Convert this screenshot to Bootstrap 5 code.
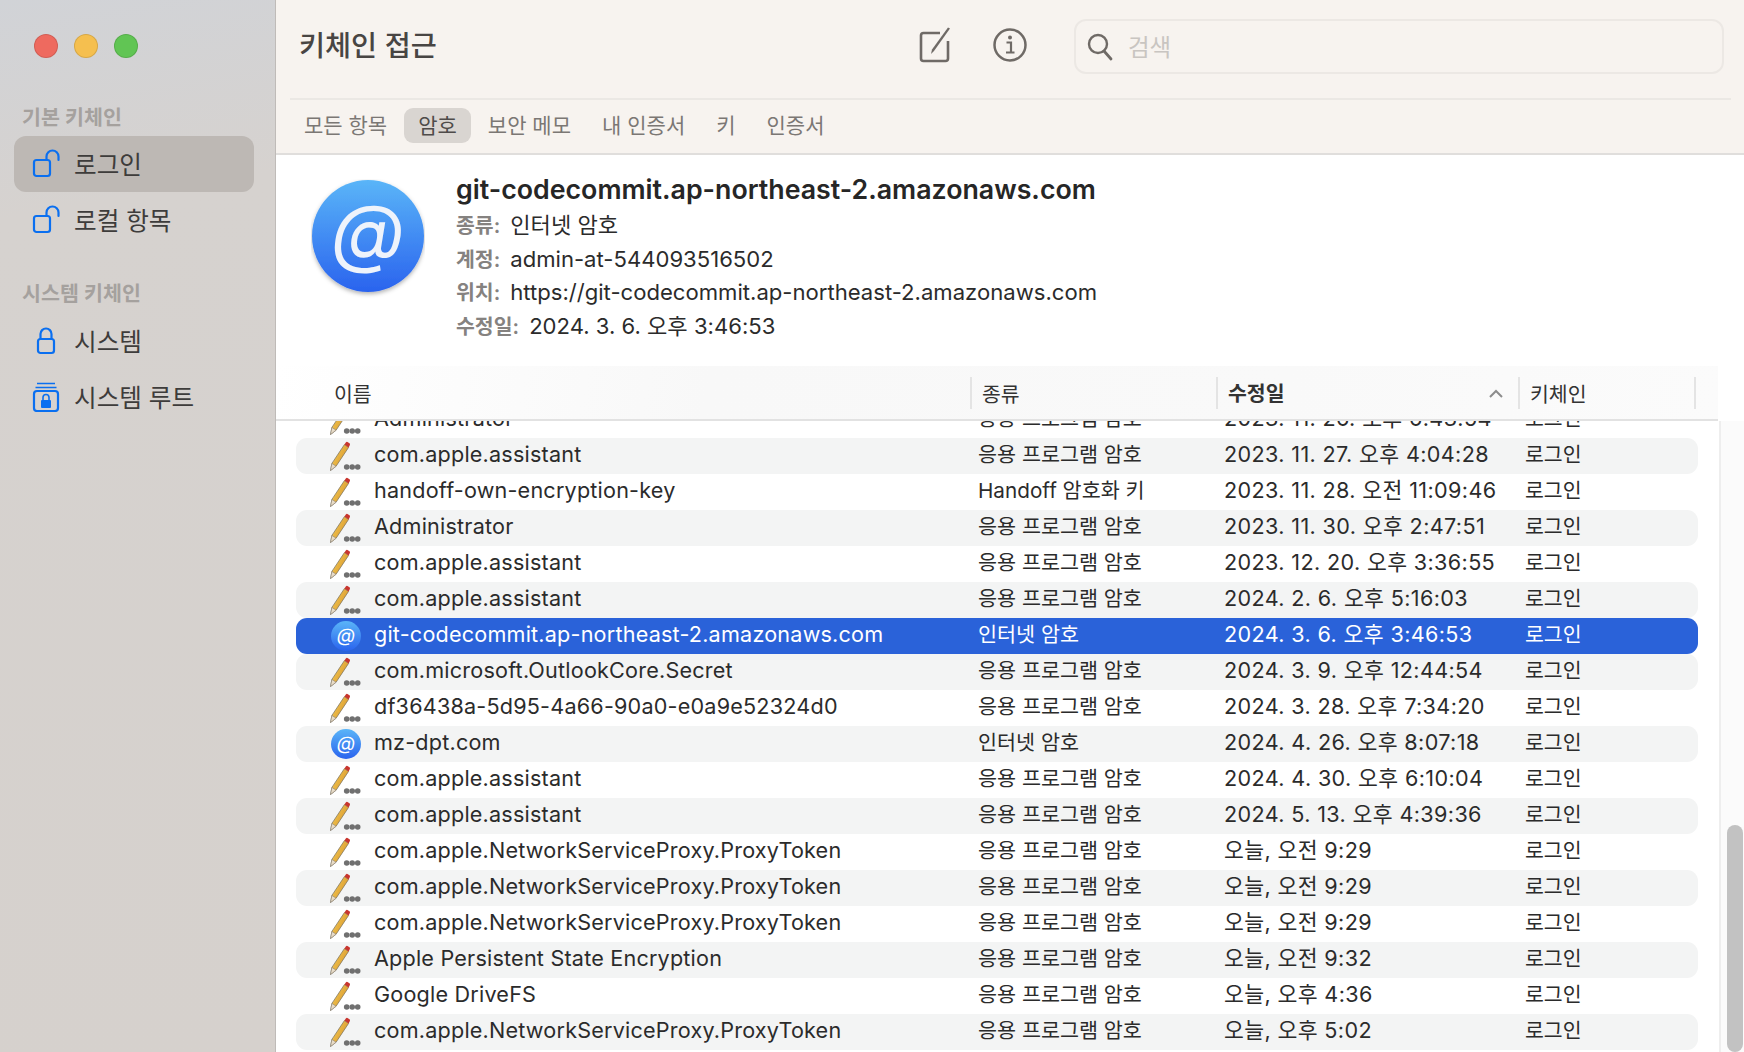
<!DOCTYPE html>
<html lang="ko">
<head>
  <meta charset="UTF-8" />
  <meta name="viewport" content="width=device-width, initial-scale=1" />
  <title>키체인 접근</title>
  <link href="https://cdn.jsdelivr.net/npm/bootstrap@5.3.0/dist/css/bootstrap.min.css" rel="stylesheet" />
  <style>
    html, body { height: 100%; }
    body {
      font-family: Inter, "Noto Sans CJK KR", sans-serif;
      background: #fff;
      color: #2b2b2b;
      overflow: hidden;
    }
    .app-frame { height: 1052px; }

    /* Sidebar */
    .side-pane {
      width: 276px;
      flex: none;
      padding: 0 21px 0 14px;
      background: linear-gradient(170deg, #d1d3d7 0, #d6d2cf 20%, #d6d1cd 100%);
      border-right: 1px solid #bfbbb8;
    }
    .traffic { gap: 16px; padding: 34px 0 0 20px; height: 102px; }
    .traffic span { width: 24px; height: 24px; border-radius: 50%; border: 1px solid rgba(0, 0, 0, .12); }
    .side-label { font-size: 20.6px; line-height: 28px; font-weight: 600; color: #a5a19e; padding: 2px 0 0 8px; height: 34px; }
    .side-label-next { height: 33px; margin-top: 32px; padding-top: 0; }
    .side-item {
      height: 56px;
      border-radius: 12px;
      font-size: 24.6px;
      color: #3e3c3b;
      padding-left: 18px;
      gap: 14px;
    }
    .side-item span { padding-top: 2px; }
    .side-item svg { width: 28px; height: 30px; flex: none; }
    .side-item.is-on { background: #bdb8b4; }

    /* Toolbar */
    .tool-area { background: #f7f3ef; border-bottom: 2px solid #e0dedc; height: 155px; flex: none; padding: 0 13px 0 14px; }
    .tool-top { height: 100px; border-bottom: 2px solid #ebe8e4; padding-left: 9px; }
    .app-title { font-size: 28.3px; font-weight: 500; color: #484543; width: 620px; margin: -4px 0 0; }
    .search-box {
      width: 650px;
      height: 55px;
      margin: -5px 7px 0 auto;
      border: 2px solid #ece8e4;
      border-radius: 12px;
      padding-left: 11px;
      gap: 15px;
      font-size: 23.5px;
      color: #c9c5c1;
    }
    .search-box span { padding-top: 2px; }
    .tool-tabs { height: 53px; gap: 17px; padding: 0 0 3px 14px; font-size: 21px; color: #7b7774; }
    .tool-tabs span { line-height: 35px; }
    .tool-tabs .is-on { background: #d9d5d1; color: #4f4c4a; border-radius: 9px; padding: 0 14px; }
    .tab-spaced { margin-left: 14px; }
    .tool-glyph { margin-top: -9px; flex: none; }
    .tool-glyph-next { margin-left: 39px; }

    /* Detail */
    .detail-pane { height: 211px; flex: none; padding: 16px 0 0 35px; gap: 31px; }
    .detail-art { margin-top: 8px; flex: none; }
    .detail-title { font-size: 26.75px; font-weight: 600; line-height: 36px; height: 38px; color: #262626; }
    .detail-line { font-size: 22.1px; line-height: 33.7px; height: 33.7px; color: #2b2b2b; }
    .detail-line b { font-weight: 600; color: #858280; margin-right: 10px; font-size: 20.5px; }

    /* Table header */
    .list-head {
      height: 55px;
      flex: none;
      width: 1442px;
      background: linear-gradient(100deg, #fff 0, #f8f8f8 30%, #f9f9f9 70%, #fbfbfb 100%);
      border-bottom: 2px solid #e2e2e2;
      font-size: 20.5px;
      color: #333;
    }
    .head-cell { height: 32px; line-height: 35px; border-left: 2px solid #e4e4e4; padding-left: 10px; flex: none; }
    .head-name { width: 694px; padding-left: 58px; border-left: 0; }
    .head-type { width: 246px; }
    .head-date { width: 302px; font-weight: 600; padding: 2px 14px 0 10px; }
    .head-key { width: 178px; border-right: 2px solid #e4e4e4; }

    /* Rows */
    .list-body { min-height: 0; flex: 1; }
    .rows-wrap { width: 1443px; padding-left: 20px; overflow: hidden; flex: none; }
    .pw-row { height: 36px; border-radius: 11px; width: 1402px; font-size: 21.6px; color: #2b2b2b; }
    .pw-row:first-child { margin-top: -19px; }
    .pw-row:nth-child(even) { background: #f3f4f4; }
    .pw-row.is-picked { background: #2a62d9; color: #fff; }
    .pw-name { width: 682px; padding-left: 34px; gap: 12px; flex: none; }
    .pw-name span { letter-spacing: .2px; padding-bottom: 4px; }
    .pw-name svg { width: 32px; height: 32px; flex: none; }
    .pw-type { width: 246px; flex: none; font-size: 20.7px; padding-bottom: 2px; }
    .pw-date { width: 301px; flex: none; letter-spacing: .36px; padding-bottom: 4px; }
    .pw-key { font-size: 20.5px; padding-bottom: 2px; }
    .scroll-lane { flex: 1; border-left: 2px solid #eee; background: #fbfbfb; padding: 0 2px 0 6px; }
    .scroll-thumb { height: 227px; width: 16px; background: #c2c2c2; border-radius: 8px; }
  </style>
</head>
<body>
  <svg width="0" height="0" class="d-block">
    <defs>
      <linearGradient id="atFill" x1="0" y1="0" x2="0" y2="1">
        <stop offset="0" stop-color="#5ab5f8" />
        <stop offset="1" stop-color="#2a63ee" />
      </linearGradient>
      <linearGradient id="pencilFill" x1="0" y1="0" x2="1" y2="0.6">
        <stop offset="0" stop-color="#f6d25c" />
        <stop offset="1" stop-color="#d9962a" />
      </linearGradient>
      <symbol id="pencilIcon" viewBox="0 0 32 32">
        <path d="M.5 30.500 1.900 23.400 14.400 4.600 18.600 7.400 6.100 26.200Z" fill="url(#pencilFill)" stroke="#77705f" stroke-width=".7" />
        <path d="M.5 30.500 1.900 23.400 6.100 26.200Z" fill="#e8dcc8" stroke="#8a837a" stroke-width=".6" />
        <path d="M14.400 4.600 16 2.200Q16.600 1.500 17.500 2L19.500 3.300Q20.300 4 19.900 4.900L18.600 7.400Z" fill="#c8352e" />
        <circle cx="16.700" cy="27" r="2.800" fill="#707070" />
        <circle cx="22.200" cy="27" r="2.800" fill="#707070" />
        <circle cx="27.700" cy="27" r="2.800" fill="#707070" />
      </symbol>
      <symbol id="atIcon" viewBox="0 0 32 32">
        <circle cx="16" cy="16" r="15" fill="url(#atFill)" />
        <text x="16" y="22" text-anchor="middle" font-family="Inter, sans-serif" font-size="19" font-style="italic" fill="#fff">@</text>
      </symbol>
      <symbol id="openLock" viewBox="0 0 28 30">
        <rect x="2" y="11" width="16" height="16" rx="2.500" fill="none" stroke="#0a6ff0" stroke-width="2.200" />
        <path d="M14.500 11V7.500a6 6 0 0 1 12 0V11" fill="none" stroke="#0a6ff0" stroke-width="2.200" stroke-linecap="round" />
      </symbol>
      <symbol id="closedLock" viewBox="0 0 28 30">
        <rect x="6" y="13" width="16" height="14" rx="2.500" fill="none" stroke="#0a6ff0" stroke-width="2.200" />
        <path d="M8.500 13V8a5.500 5.500 0 0 1 11 0V13" fill="none" stroke="#0a6ff0" stroke-width="2.200" />
      </symbol>
      <symbol id="rootLock" viewBox="0 0 28 30">
        <rect x="2" y="9" width="24" height="20" rx="3" fill="none" stroke="#0a6ff0" stroke-width="2.200" />
        <path d="M5 1.500H23M3.500 5.500H24.500" stroke="#0a6ff0" stroke-width="1.400" />
        <rect x="9" y="18" width="10" height="8" rx="1" fill="#0a6ff0" />
        <path d="M11 18v-2.500a3 3 0 0 1 6 0V18" fill="none" stroke="#0a6ff0" stroke-width="1.600" />
      </symbol>
    </defs>
  </svg>

  <div class="app-frame d-flex">
    <!-- Sidebar -->
    <aside class="side-pane">
      <div class="traffic d-flex">
        <span style="background:#ee6a5f"></span>
        <span style="background:#f5bf4f"></span>
        <span style="background:#61c554"></span>
      </div>
      <div class="side-label">기본 키체인</div>
      <div class="side-item is-on d-flex align-items-center"><svg><use href="#openLock" /></svg><span>로그인</span></div>
      <div class="side-item d-flex align-items-center"><svg><use href="#openLock" /></svg><span>로컬 항목</span></div>
      <div class="side-label side-label-next">시스템 키체인</div>
      <div class="side-item d-flex align-items-center"><svg><use href="#closedLock" /></svg><span>시스템</span></div>
      <div class="side-item d-flex align-items-center"><svg><use href="#rootLock" /></svg><span>시스템 루트</span></div>
    </aside>

    <main class="flex-grow-1 d-flex flex-column" style="min-width:0">
      <!-- Toolbar -->
      <div class="tool-area">
        <div class="tool-top d-flex align-items-center">
          <h1 class="app-title">키체인 접근</h1>
          <svg class="tool-glyph" width="34" height="36" viewBox="0 0 34 36">
            <path d="M21 6H4.500A2.500 2.500 0 0 0 2 8.500V31.500A2.500 2.500 0 0 0 4.500 34H26.500A2.500 2.500 0 0 0 29 31.500V14" fill="none" stroke="#6f6a66" stroke-width="2.600" />
            <path d="M31 1.500 15 24l-3 3 1-4.500L29 .5Z" fill="#6f6a66" />
          </svg>
          <svg class="tool-glyph tool-glyph-next" width="36" height="36" viewBox="0 0 36 36">
            <circle cx="18" cy="18" r="15.500" fill="none" stroke="#6f6a66" stroke-width="2.500" />
            <circle cx="18" cy="10.500" r="2" fill="#6f6a66" />
            <path d="M14.500 15.500H19V25M14 25.500H22.500" fill="none" stroke="#6f6a66" stroke-width="2.200" />
          </svg>
          <div class="search-box d-flex align-items-center">
            <svg width="26" height="28" viewBox="0 0 26 28">
              <circle cx="11" cy="11" r="9" fill="none" stroke="#6f6a66" stroke-width="2.400" />
              <path d="M17 18 24 26" stroke="#6f6a66" stroke-width="2.800" stroke-linecap="round" />
            </svg>
            <span>검색</span>
          </div>
        </div>
        <div class="tool-tabs d-flex align-items-center">
          <span>모든 항목</span>
          <span class="is-on">암호</span>
          <span>보안 메모</span>
          <span class="tab-spaced">내 인증서</span>
          <span class="tab-spaced">키</span>
          <span class="tab-spaced">인증서</span>
        </div>
      </div>

      <!-- Selected item detail -->
      <section class="detail-pane d-flex">
        <svg class="detail-art" width="114" height="120" viewBox="0 0 114 120">
          <defs>
            <filter id="atShadow" x="-10%" y="-10%" width="120%" height="125%">
              <feDropShadow dx="0" dy="2" stdDeviation="2" flood-opacity=".3" />
            </filter>
          </defs>
          <circle cx="57" cy="57" r="56" fill="url(#atFill)" filter="url(#atShadow)" />
          <text x="57" y="80" text-anchor="middle" font-family="Inter, sans-serif" font-size="76" font-style="italic" fill="#eef3fb">@</text>
        </svg>
        <div>
          <div class="detail-title">git-codecommit.ap-northeast-2.amazonaws.com</div>
          <div class="detail-line"><b>종류:</b>인터넷 암호</div>
          <div class="detail-line"><b>계정:</b>admin-at-544093516502</div>
          <div class="detail-line"><b>위치:</b>https://git-codecommit.ap-northeast-2.amazonaws.com</div>
          <div class="detail-line"><b>수정일:</b>2024. 3. 6. 오후 3:46:53</div>
        </div>
      </section>

      <!-- Column headers -->
      <div class="list-head d-flex align-items-center">
        <div class="head-cell head-name">이름</div>
        <div class="head-cell head-type">종류</div>
        <div class="head-cell head-date d-flex justify-content-between align-items-center">
          <span>수정일</span>
          <svg width="16" height="10" viewBox="0 0 16 10"><path d="M2 8 8 2 14 8" fill="none" stroke="#8c8c8c" stroke-width="2" /></svg>
        </div>
        <div class="head-cell head-key">키체인</div>
      </div>

      <!-- Password rows -->
      <div class="list-body d-flex overflow-hidden">
        <div class="rows-wrap" id="pw-rows"></div>
        <div class="scroll-lane d-flex flex-column justify-content-end">
          <div class="scroll-thumb"></div>
        </div>
      </div>
    </main>
  </div>

  <script src="https://cdn.jsdelivr.net/npm/bootstrap@5.3.0/dist/js/bootstrap.bundle.min.js"></script>
  <script>
    const APP = '응용 프로그램 암호';
    const NET = '인터넷 암호';
    // name, kind, date
    const rows = [
      ['Administrator', APP, '2023. 11. 26. 오후 6:43:54'],
      ['com.apple.assistant', APP, '2023. 11. 27. 오후 4:04:28'],
      ['handoff-own-encryption-key', 'Handoff 암호화 키', '2023. 11. 28. 오전 11:09:46'],
      ['Administrator', APP, '2023. 11. 30. 오후 2:47:51'],
      ['com.apple.assistant', APP, '2023. 12. 20. 오후 3:36:55'],
      ['com.apple.assistant', APP, '2024. 2. 6. 오후 5:16:03'],
      ['git-codecommit.ap-northeast-2.amazonaws.com', NET, '2024. 3. 6. 오후 3:46:53'],
      ['com.microsoft.OutlookCore.Secret', APP, '2024. 3. 9. 오후 12:44:54'],
      ['df36438a-5d95-4a66-90a0-e0a9e52324d0', APP, '2024. 3. 28. 오후 7:34:20'],
      ['mz-dpt.com', NET, '2024. 4. 26. 오후 8:07:18'],
      ['com.apple.assistant', APP, '2024. 4. 30. 오후 6:10:04'],
      ['com.apple.assistant', APP, '2024. 5. 13. 오후 4:39:36'],
      ['com.apple.NetworkServiceProxy.ProxyToken', APP, '오늘, 오전 9:29'],
      ['com.apple.NetworkServiceProxy.ProxyToken', APP, '오늘, 오전 9:29'],
      ['com.apple.NetworkServiceProxy.ProxyToken', APP, '오늘, 오전 9:29'],
      ['Apple Persistent State Encryption', APP, '오늘, 오전 9:32'],
      ['Google DriveFS', APP, '오늘, 오후 4:36'],
      ['com.apple.NetworkServiceProxy.ProxyToken', APP, '오늘, 오후 5:02']
    ];
    const holder = document.getElementById('pw-rows');
    rows.forEach(([name, kind, date]) => {
      const row = document.createElement('div');
      row.className = 'pw-row d-flex align-items-center';
      if (name.startsWith('git-')) row.classList.add('is-picked');
      const icon = kind === NET ? 'atIcon' : 'pencilIcon';
      row.innerHTML = `
        <div class="pw-name d-flex align-items-center"><svg><use href="#${icon}" /></svg><span>${name}</span></div>
        <div class="pw-type">${kind}</div>
        <div class="pw-date">${date}</div>
        <div class="pw-key">로그인</div>`;
      holder.appendChild(row);
    });
  </script>
</body>
</html>
